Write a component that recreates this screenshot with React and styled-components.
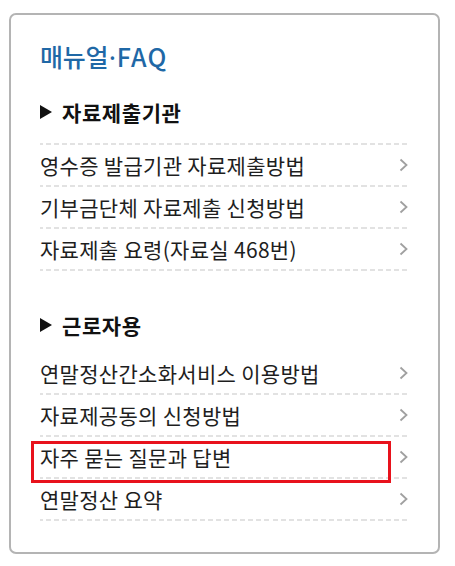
import React from "react";
import styled, { createGlobalStyle } from "styled-components";

const GlobalStyle = createGlobalStyle`
  html, body {
    margin: 0;
    padding: 0;
    background: #fff;
  }
  body {
    font-family: "Noto Sans CJK KR", "Noto Sans", sans-serif;
  }
`;

const Page = styled.div`
  padding: 13px 0 0 9px;
`;

const Card = styled.div`
  box-sizing: border-box;
  width: 431px;
  height: 541px;
  border: 2px solid #b4b4b4;
  border-radius: 7px;
  padding: 23px 29px 0 29px;
`;

const Title = styled.h2`
  margin: 0;
  font-size: 25px;
  line-height: 36px;
  font-weight: 500;
  color: #1f68a6;
  letter-spacing: -0.3px;
`;

const Dot = styled.span`
  font-family: "Noto Sans", sans-serif;
  margin: 0 1px;
`;

const Latin = styled.span`
  letter-spacing: 1.2px;
`;

const Section = styled.div`
  margin-top: ${(p) => p.gap}px;
`;

const Header = styled.h3`
  display: flex;
  align-items: center;
  gap: 10px;
  margin: 0;
  font-size: 21px;
  line-height: 30px;
  font-weight: 700;
  color: #111;
  letter-spacing: 0.6px;
`;

const Arrow = styled.span`
  width: 0;
  height: 0;
  border-top: 7px solid transparent;
  border-bottom: 7px solid transparent;
  border-left: 12px solid #111;
`;

const List = styled.ul`
  list-style: none;
  margin: ${(p) => p.top}px 0 0 0;
  padding: 0;
  ${(p) =>
    p.lined &&
    `
    border-top: 2px solid transparent;
    border-image: repeating-linear-gradient(to right, #e2e2e2 0 5px, transparent 5px 8px) 2;
  `}
`;

const Row = styled.li`
  position: relative;
  display: flex;
  align-items: center;
  justify-content: space-between;
  height: 40px;
  border-bottom: 2px solid transparent;
  border-image: repeating-linear-gradient(to right, #e2e2e2 0 5px, transparent 5px 8px) 2;
  font-size: 21px;
  color: #1e1e1e;
  letter-spacing: 0.3px;
`;

const Label = styled.span`
  white-space: nowrap;
`;

const Chevron = styled.svg`
  width: 9px;
  height: 14px;
  margin-right: 1px;
  flex: none;
`;

const Highlight = styled.span`
  position: absolute;
  left: -9px;
  top: 4px;
  width: 360px;
  height: 42px;
  box-sizing: border-box;
  border: 3px solid #e8121c;
  pointer-events: none;
`;

const sections = [
  {
    title: "자료제출기관",
    gap: 22,
    top: 16,
    lined: true,
    items: [
      { label: "영수증 발급기관 자료제출방법" },
      { label: "기부금단체 자료제출 신청방법" },
      { label: "자료제출 요령(자료실 468번)" },
    ],
  },
  {
    title: "근로자용",
    gap: 39,
    top: 13,
    lined: false,
    items: [
      { label: "연말정산간소화서비스 이용방법" },
      { label: "자료제공동의 신청방법" },
      { label: "자주 묻는 질문과 답변", marked: true },
      { label: "연말정산 요약" },
    ],
  },
];

const ChevronIcon = () => (
  <Chevron viewBox="0 0 9 14">
    <polyline
      points="1.5,1.5 7.5,7 1.5,12.5"
      fill="none"
      stroke="#a0a0a0"
      strokeWidth="1.8"
    />
  </Chevron>
);

const App = () => {
  return (
    <Page>
      <GlobalStyle />
      <Card>
        <Title>
          매뉴얼<Dot>·</Dot>
          <Latin>FAQ</Latin>
        </Title>
        {sections.map((section) => (
          <Section gap={section.gap} key={section.title}>
            <Header>
              <Arrow />
              {section.title}
            </Header>
            <List top={section.top} lined={section.lined}>
              {section.items.map((item, index) => (
                <Row key={index}>
                  <Label>{item.label}</Label>
                  <ChevronIcon />
                  {item.marked && <Highlight />}
                </Row>
              ))}
            </List>
          </Section>
        ))}
      </Card>
    </Page>
  );
};

export default App;
